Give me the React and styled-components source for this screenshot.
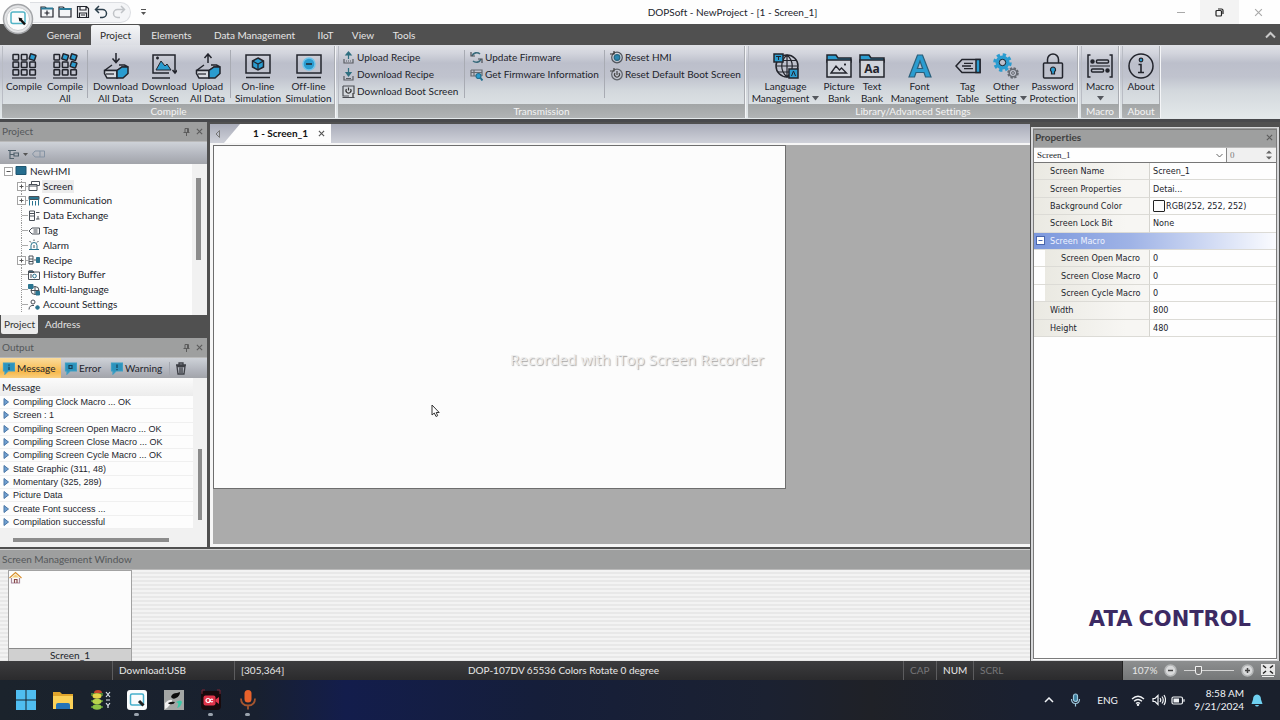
import React from "react";
import styled, { createGlobalStyle, css } from "styled-components";

const UI = `Lato, "Open Sans", sans-serif`;
const INK = "#22242c";
const BLUE = "#2a9cd0";

const Global = createGlobalStyle`
  * { box-sizing: border-box; }
  body { margin: 0; background: #4f4f4f; font-family: ${UI}; font-size: 10px; line-height: 13px; font-variant-ligatures: none; color: ${INK}; overflow-x: hidden; }
  button, input, select { font: inherit; font-variant-ligatures: none; color: inherit; margin: 0; padding: 0; border: 0; background: none; border-radius: 0; }
  h1, h2, ul, p { margin: 0; padding: 0; font-size: inherit; font-weight: inherit; list-style: none; }
  svg { display: block; flex: none; }
`;

const App_ = styled.div`
  min-height: 100vh;
  display: flex;
  flex-direction: column;
`;

/* ---------- title bar ---------- */
const TitleBar = styled.header`
  display: grid;
  grid-template-columns: 7fr auto 5fr;
  align-items: center;
  height: 24px;
  background: #fefefe;
`;
const QuickAccess = styled.div`
  display: flex;
  align-items: center;
  gap: 10px;
`;
const AppButton = styled.button`
  position: relative;
  z-index: 2;
  width: 32px;
  height: 24px;
  svg { position: absolute; left: 2px; top: 3px; }
`;
const QuickGroup = styled.div`
  display: flex;
  align-items: center;
  gap: 4px;
  height: 21px;
  padding: 0 4px 0 10px;
  margin-left: -12px;
  border: 1px solid #dcdee2;
  border-left: 0;
  border-radius: 0 11px 11px 0;
  background: #f4f5f7;
`;
const Title = styled.h1`
  font-size: 10px;
`;
const WinControls = styled.div`
  display: flex;
  justify-content: flex-end;
  height: 24px;
  padding-right: 2px;
`;
const WinButton = styled.button`
  width: 39px;
  display: grid;
  place-items: center;
  color: ${(p) => (p.$strong ? "#222" : "#a9a9a9")};
  background: ${(p) => (p.$strong ? "#f3f3f3" : "transparent")};
`;

/* ---------- ribbon ---------- */
const TabBar = styled.nav`
  display: flex;
  align-items: flex-end;
  height: 21px;
  padding: 0 4px 0 37px;
  background: #505050;
`;
const RibbonTab = styled.button`
  width: ${(p) => p.$w}px;
  height: 20px;
  color: ${(p) => (p.$active ? "#2b2b2b" : "#e6e6e6")};
  border-radius: 2px 2px 0 0;
  background: ${(p) => (p.$active ? "linear-gradient(#f6f7f8, #dcdee4)" : "transparent")};
`;
const Spacer = styled.div`
  flex: 1;
`;
const Collapse = styled.button`
  height: 20px;
  color: #c9c9c9;
`;
const Ribbon = styled.section`
  display: flex;
  gap: 2px;
  height: 77px;
  padding: 1px 0 1px 2px;
  border-bottom: 3px solid #48494c;
  background: linear-gradient(#dfe1e6 0, #d3d5dd 8px, #bcbfcb 18px, #c0c3ce 32px, #d3d8dd 46px, #e3e8ea 72px);
`;
const Group = styled.div`
  flex: none;
  display: flex;
  flex-direction: column;
  border-right: 1px solid #f4f5f7;
  box-shadow: inset -1px 0 #a9acb2, inset 1px 0 #b9bcc4;
`;
const GroupBody = styled.div`
  flex: none;
  display: flex;
  height: 58px;
  padding: ${(p) => p.$pad || "0"};
`;
const GroupLabel = styled.div`
  height: 14px;
  line-height: 14px;
  text-align: center;
  color: #f4f4f4;
  border-radius: 0 0 2px 2px;
  background: linear-gradient(#a2a5a6, #b1b4b5);
`;
const Big = styled.button`
  width: ${(p) => p.$w}px;
  height: 58px;
  display: flex;
  flex-direction: column;
  align-items: center;
  padding-top: 6px;
  white-space: nowrap;
  line-height: 12px;
`;
const BigIcon = styled.span`
  display: grid;
  place-items: center;
  height: 28px;
`;
const Line = styled.span`
  display: flex;
  align-items: center;
  gap: 3px;
  min-height: 12px;
`;
const Divider = styled.span`
  width: 1px;
  margin: 4px 1px 6px;
  background: #a8abb3;
`;
const SmallColumn = styled.div`
  width: ${(p) => p.$w}px;
  display: flex;
  flex-direction: column;
  padding: 3px 0 0 4px;
`;
const Small = styled.button`
  display: flex;
  align-items: center;
  gap: 2px;
  height: 17px;
  white-space: nowrap;
`;

/* ---------- work area ---------- */
const Body = styled.main`
  flex: 1;
  display: flex;
  background: #505050;
`;
const Main = styled.div`
  flex: 1;
  min-width: 0;
  display: flex;
  flex-direction: column;
`;
const Upper = styled.div`
  flex: 1;
  display: flex;
  gap: 3px;
  padding-bottom: 2px;
`;
const Dock = styled.aside`
  width: 207px;
  display: flex;
  flex-direction: column;
`;
const PanelHead = styled.div`
  display: flex;
  align-items: center;
  gap: 6px;
  height: 20px;
  padding: 0 4px 0 2px;
  color: ${(p) => (p.$bold ? "#3f4040" : "#54575a")};
  font-weight: ${(p) => (p.$bold ? 700 : 400)};
  background: #9e9f9f;
  border-bottom: 1px solid #b9b9b9;
  h2 { flex: 1; }
`;
const HeadButton = styled.button`
  color: #5c5c5c;
`;
const ToolStrip = styled.div`
  display: flex;
  align-items: center;
  gap: ${(p) => p.$gap}px;
  height: ${(p) => p.$h}px;
  padding: ${(p) => p.$pad || "0"};
  background: linear-gradient(#ced2d8, #b2b5bd 60%, #a2a4aa);
`;
const ClearButton = styled.button`
  padding-left: 5px;
  border-left: 1px solid #a3a6ae;
`;
const TreeBox = styled.div`
  display: flex;
  height: 151px;
  overflow: hidden;
  background: #fdfdfd;
`;
const Tree = styled.ul`
  flex: 1;
  display: grid;
  grid-template-rows: repeat(10, 1fr);
  height: 148px;
`;
const TreeRow = styled.li`
  display: flex;
  align-items: center;
  padding-left: ${(p) => (p.$root ? 4 : 17)}px;
`;
const Branch = styled.span`
  display: flex;
  align-items: center;
  align-self: stretch;
  width: 11px;
  background: ${(p) =>
    p.$root
      ? "none"
      : "repeating-linear-gradient(#999 0 1px, transparent 1px 2px) 4px 0 / 1px 100% no-repeat, linear-gradient(90deg, transparent 5px, #aaa 5px) 0 50% / 100% 1px no-repeat"};
`;
const TreeButton = styled.button`
  display: flex;
  align-items: center;
  gap: 2px;
  white-space: nowrap;
  span { padding: 0 1px; background: ${(p) => (p.$selected ? "#ececec" : "transparent")}; }
`;
const ScrollTrack = styled.div`
  width: ${(p) => p.$w}px;
  padding: ${(p) => p.$pad};
  background: #f1f1f1;
`;
const ScrollThumb = styled.div`
  height: 100%;
  background: #8c8c8c;
`;
const DockTabs = styled.div`
  display: flex;
  gap: 4px;
  height: 23px;
  padding: 0 1px;
`;
const DockTab = styled.button`
  height: 19px;
  padding: 0 3px;
  color: ${(p) => (p.$active ? "#333" : "#e4e4e4")};
  border-radius: 0 0 2px 2px;
  background: ${(p) => (p.$active ? "#ebebeb" : "transparent")};
`;
const FilterButton = styled.button`
  display: flex;
  align-items: center;
  gap: 2px;
  width: ${(p) => p.$w}px;
  height: 20px;
  padding-left: 2px;
  background: ${(p) => (p.$on ? "linear-gradient(#fbdc9c, #f8b94c 70%, #f9cf80)" : "transparent")};
`;
const OutputBox = styled.div`
  flex: 1;
  display: flex;
  background: #f1f1f1;
`;
const OutputMain = styled.div`
  flex: 1;
  display: flex;
  flex-direction: column;
`;
const MessageTable = styled.table`
  width: 100%;
  height: 151px;
  border-collapse: separate;
  border-spacing: 0;
  font-family: "Liberation Sans", sans-serif;
  font-size: 9px;
  line-height: 12px;
  background: #fdfdfd;
  th { height: 18px; padding: 0 2px; text-align: left; font: 10px/16px ${UI}; background: linear-gradient(#fbfbfb, #ececec); }
  td { height: 13px; padding: 0 3px; border-bottom: 1px solid #f0f0f0; }
  div { display: flex; align-items: center; gap: 4px; white-space: nowrap; }
`;
const HTrack = styled.div`
  flex: 1;
  display: flex;
  align-items: flex-end;
  padding: 0 24px 5px 13px;
`;
const HThumb = styled.div`
  flex: 1;
  height: 4px;
  background: #8c8c8c;
`;

const Editor = styled.section`
  flex: 1;
  min-width: 0;
  display: flex;
  flex-direction: column;
  padding-top: 2px;
`;
const DocTabs = styled.div`
  display: flex;
  height: 19px;
  background: linear-gradient(#a9acb9, #cfd1d9);
`;
const DocArrow = styled.button`
  width: 14px;
  display: grid;
  place-items: center;
`;
const DocTab = styled.div`
  display: flex;
  align-items: center;
  justify-content: flex-end;
  gap: 10px;
  width: 107px;
  padding-right: 6px;
  font-weight: 700;
  color: #111;
  background: #fdfdfd;
  clip-path: polygon(16px 0, 100% 0, 100% 100%, 0 100%);
`;
const Workspace = styled.div`
  flex: 1;
  padding: 0;
  border: solid #f6f6f6;
  border-width: 2px 0 3px 3px;
  background: #ababab;
`;
const Canvas = styled.div`
  position: relative;
  width: 573px;
  max-width: 100%;
  height: 344px;
  border: 1px solid #6e6e6e;
  background: #fcfcfc;
`;
const Watermark = styled.p`
  position: absolute;
  left: 296px;
  top: 203px;
  font-family: "Open Sans", sans-serif;
  font-size: 15px;
  line-height: 20px;
  white-space: nowrap;
  color: #ededed;
  text-shadow: 1px 1px 1px #a6a6a6;
`;
const Cursor = styled.svg`
  position: absolute;
  left: 217px;
  top: 258px;
`;

const Manager = styled.section`
  height: 112px;
  display: flex;
  flex-direction: column;
  border-top: 1px solid #d0d0d0;
`;
const Thumbs = styled.div`
  flex: 1;
  overflow: hidden;
  padding-left: 8px;
  background: repeating-linear-gradient(#f3f3f3 0 2px, #e8e8e8 2px 4px);
`;
const Thumb = styled.figure`
  width: 124px;
  height: 100%;
  overflow: hidden;
  margin: 0;
  border: solid #a2a2a2;
  border-width: 1px 1px 0;
  background: #d0d0d0;
  figcaption { text-align: center; line-height: 13px; }
`;
const ThumbPage = styled.div`
  height: 78px;
  border-bottom: 1px solid #8a8a8a;
  background: #fcfcfc;
`;

/* ---------- properties ---------- */
const Properties = styled.aside`
  width: 248px;
  margin: 5px 1px 0;
  display: flex;
  flex-direction: column;
  border: solid #d7d8da;
  border-width: 1px 2px;
  outline: 1px solid #7b7b7b;
  outline-offset: -3px;
  background: #fefefe;
`;
const Picker = styled.div`
  display: flex;
  height: 15px;
  border-bottom: 1px solid #777;
`;
const SelectWrap = styled.div`
  flex: 1;
  display: flex;
  align-items: center;
  padding-right: 3px;
  border-right: 1px solid #888;
  select { flex: 1; appearance: none; padding-left: 4px; font: 9px/13px "Liberation Serif", serif; outline: 0; }
`;
const SpinWrap = styled.div`
  width: 50px;
  display: flex;
  align-items: center;
  padding: 0 5px 0 3px;
  background: #f0f0f0;
  input { flex: 1; min-width: 0; height: 13px; font: 9px/11px "Liberation Serif", serif; color: #7a7a7a; }
`;
const PropTable = styled.table`
  width: 100%;
  height: 174px;
  border-collapse: separate;
  border-spacing: 0;
  table-layout: fixed;
  font-family: "DejaVu Sans Condensed", "DejaVu Sans", sans-serif;
  font-stretch: condensed;
  font-size: 9px;
  line-height: 12px;
  th, td { padding: 0; font-weight: 400; text-align: left; white-space: nowrap; border-bottom: 1px solid #dcdbd6; }
  th { width: 117px; padding-left: 17px; border-right: 1px solid #d5d4cf; background: linear-gradient(90deg, #eae9e2, #f7f6f3 80%); }
  td { padding-left: 3px; }
`;
const PropRow = styled.tr`
  ${(p) =>
    p.$child &&
    css`
      && th { padding-left: 28px; background: linear-gradient(90deg, #fefefe 12px, #eae9e2 12px, #f7f6f3 90%); }
    `}
`;
const SectionRow = styled.tr`
  background: linear-gradient(90deg, #7c98dd, #9fb3e6 40%, #fbfcff);
  && th { padding-left: 3px; border-right: 0; background: none; color: #eef2ff; }
  button { display: flex; align-items: center; gap: 5px; }
`;
const ColorValue = styled.span`
  display: flex;
  align-items: center;
  gap: 1px;
`;
const Swatch = styled.span`
  width: 12px;
  height: 12px;
  border: 1px solid #222;
  border-radius: 1px;
  background: #fcfcfc;
`;
const Brand = styled.p`
  margin: auto 26px 29px auto;
  display: flex;
  gap: 6px;
  font: 700 21px/24px "DejaVu Sans", sans-serif;
  color: #3c2a63;
`;

/* ---------- status bar ---------- */
const StatusBar = styled.footer`
  display: flex;
  height: 19px;
  align-items: stretch;
  color: #e6e6e6;
  background: linear-gradient(#3c3c3e, #2b2b2d);
`;
const StatusCell = styled.div`
  flex: ${(p) => (p.$grow ? "1" : "none")};
  width: ${(p) => (p.$grow ? "auto" : p.$w + "px")};
  padding-left: 6px;
  line-height: 19px;
  white-space: nowrap;
  color: ${(p) => (p.$dim ? "#77777a" : "#e8e8e8")};
  border-left: ${(p) => (p.$line ? "1px solid #5c5c5e" : "0")};
`;
const ZoomBox = styled.div`
  width: 158px;
  display: flex;
  align-items: center;
  gap: 5px;
  padding: 0 5px 0 9px;
  background: linear-gradient(#8d8f90, #747677);
  border-left: 1px solid #222;
  output { width: 27px; }
  button:last-child { margin-left: auto; }
`;
const Range = styled.input`
  appearance: none;
  margin: 0 2px;
  width: 50px;
  height: 14px;
  background: linear-gradient(#d4d4d4, #d4d4d4) center / 100% 1px no-repeat;
  &::-webkit-slider-thumb {
    appearance: none;
    width: 7px;
    height: 9px;
    border: 1px solid #f2f2f2;
    border-radius: 0 0 3px 3px;
    background: #777;
  }
`;

/* ---------- taskbar ---------- */
const Taskbar = styled.footer`
  display: flex;
  align-items: center;
  height: 40px;
  padding: 0 11px 0 7px;
  color: #f1f3f6;
  background: linear-gradient(90deg, #1b232c 0, #18202f 20%, #131d4c 27%, #151e3a 42%, #1b2131 60%, #1f2127 68%, #1a2030 80%, #1a202c);
`;
const TaskButton = styled.button`
  width: 37px;
  height: 40px;
  display: flex;
  flex-direction: column;
  align-items: center;
  gap: 2px;
  padding-top: 9px;
  &::after {
    content: "";
    width: 5px;
    height: 3px;
    border-radius: 2px;
    background: ${(p) => (p.$open ? "#9aa3ad" : "transparent")};
  }
`;
const Tray = styled.div`
  display: flex;
  align-items: center;
  button { display: grid; place-items: center; }
`;
const TrayButton = styled.button`
  width: ${(p) => p.$w}px;
`;
const Clock = styled.div`
  width: 57px;
  padding-right: 1px;
  text-align: right;
`;

/* ---------- icons ---------- */
const Ico = ({ w = 26, h = w, vb, children, ...r }) => (
  <svg width={w} height={h} viewBox={vb || `0 0 ${w} ${h}`} fill="none" stroke={INK} strokeWidth="1.5" aria-hidden="true" {...r}>
    {children}
  </svg>
);
const Compile = ({ all }) => (
  <Ico>
    {[0, 1, 2].map((r) =>
      [0, 1, 2].map((c) => {
        const hot = all ? (r === 0 && c > 0) || (r === 1 && c === 2) : r === 0 && c === 2;
        return (
          <rect key={r + "-" + c} x={2 + c * 8.4} y={1.5 + r * 7.6} width="5.6" height="5.4" rx=".6"
            fill={hot ? BLUE : "none"} transform={hot ? `rotate(18 ${5 + c * 8.4} ${4 + r * 7.6})` : undefined} />
        );
      })
    )}
    <path d="M1 25h24" strokeWidth="1.2" />
  </Ico>
);
const Device = ({ up }) => (
  <Ico>
    <path d={up ? "M13 10V1M9.500 5 13 1l3.500 4" : "M13 0v9M9.500 5.500 13 9.500l3.500-4"} />
    <path d="M9 12 1.500 17.500M16 12h5.500L25 14M1.500 17.500H14L19 14h6" />
    <path d="M1.500 17.500v3L4 25h10v-7.500z" fill="#d8dbe1" />
    <path d="M14 17.500 19 14h6v6.500L20 25h-6z" fill={BLUE} />
    <path d="M3 21h8" strokeWidth="1.200" />
  </Ico>
);
const DownloadScreen = () => (
  <Ico>
    <path d="M24 11V2H2v18h16M1 25h18" />
    <path d="m5 17 5-9 4 5 2-2 4 6z" fill={BLUE} stroke="none" />
    <path d="m5 17 5-9 4 5 2-2 4 6z" strokeWidth="1" />
    <path d="M24 11v9M21.500 17l2.500 3 2.500-3M5 5h3M6.500 3.500v3" />
  </Ico>
);
const Simulation = ({ off }) => (
  <Ico>
    <rect x="1" y="2" width="24" height="18" />
    <path d="M1 24.500h24" />
    {off ? (
      <>
        <circle cx="13" cy="11" r="6" fill={BLUE} stroke="#6fc4ea" />
        <path d="M10 11h6" />
      </>
    ) : (
      <>
        <path d="m13 5 5.500 3v6L13 17l-5.500-3V8z" fill={BLUE} />
        <path d="m7.500 8 5.500 3 5.500-3M13 11v6" strokeWidth="1.200" />
      </>
    )}
  </Ico>
);
const Language = () => (
  <Ico>
    <circle cx="14" cy="13" r="11" />
    <path d="M14 2v22M3 13h22M5 7.500h18M5 19h18M14 2c-7 6-7 16 0 22M14 2c7 6 7 16 0 22" strokeWidth="1.200" />
    <rect x="1" y="1" width="9" height="8" fill={BLUE} />
    <rect x="16" y="16" width="9" height="9" fill={BLUE} />
    <path d="M3 3.500h5M5.500 3.500V7M18.500 23l2-5 2 5" strokeWidth="1" />
  </Ico>
);
const Folder = ({ text }) => (
  <Ico>
    <path d="M1 2h9l2 3h13v4H1z" fill={BLUE} />
    <path d="M1 7h24v17H1z" fill="#d0d4db" />
    {text ? (
      <text x="13" y="20" textAnchor="middle" fontFamily="Open Sans" fontWeight="700" fontSize="12" fill={INK} stroke="none">Aa</text>
    ) : (
      <path d="m5 20 5-7 3.500 4 2-2 5 5zM19 10.500v2M18 11.500h2" strokeWidth="1.300" />
    )}
  </Ico>
);
const FontA = () => (
  <Ico>
    <path d="M10.500 2h5L24 24h-5.500l-1.500-4.500H9L7.500 24H2zM13 8l-2.600 7.500h5.200z" fill={BLUE} fillRule="evenodd" stroke="#2b5f7a" strokeWidth="1.200" />
  </Ico>
);
const TagIcon = () => (
  <Ico>
    <path d="M7 6.500h18v13H7L1 13z" />
    <path d="M21 6.500h4v13h-4z" fill={BLUE} />
    <path d="M9 10.300h9M7 13h9M9 15.700h9" strokeWidth="1.300" />
  </Ico>
);
const Gears = () => (
  <Ico>
    <circle cx="9.500" cy="9.500" r="7.500" stroke={BLUE} strokeWidth="3.500" strokeDasharray="3.200 2.690" />
    <circle cx="9.500" cy="9.500" r="5" stroke={BLUE} strokeWidth="4" />
    <circle cx="9.500" cy="9.500" r="3.200" strokeWidth="1" />
    <circle cx="20" cy="20" r="4.800" stroke="#666a72" strokeWidth="2" strokeDasharray="2.300 1.470" />
    <circle cx="20" cy="20" r="3.800" stroke="#666a72" />
    <circle cx="20" cy="20" r="1.400" stroke="#666a72" strokeWidth="1" />
  </Ico>
);
const Lock = () => (
  <Ico>
    <rect x="3.500" y="10" width="19" height="15" rx="1" />
    <path d="M7.500 10V6.500a5.500 5.500 0 0 1 11 0V10" />
    <path d="M13 14a2.600 2.600 0 0 1 1.500 4.700V21h-3v-2.300A2.600 2.600 0 0 1 13 14z" fill={BLUE} strokeWidth="1.200" />
  </Ico>
);
const MacroIcon = () => (
  <Ico>
    <path d="M3.500 2H1v22h2.500M22.500 2H25v22h-2.500" />
    <circle cx="5.500" cy="8.500" r="1.500" fill={INK} />
    <rect x="9.500" y="7" width="12" height="3" rx="1" />
    <rect x="4.500" y="16" width="12" height="3" rx="1" />
    <circle cx="20.500" cy="17.500" r="1.500" fill={INK} />
    <path d="M3 13h20" strokeWidth="1" />
  </Ico>
);
const About = () => (
  <Ico>
    <circle cx="13" cy="13" r="12" />
    <circle cx="13" cy="7" r="1.800" fill={BLUE} strokeWidth="1.200" />
    <path d="M10.500 11.500H13V19M10 19.500h6" strokeWidth="1.600" />
  </Ico>
);
const Caret = () => (
  <Ico w={7} h={5} stroke="none"><path d="M0 0h7L3.500 4.500z" fill="#55585e" /></Ico>
);
const Cross = ({ w = 7, ...r }) => (
  <Ico w={w} vb="0 0 8 8" stroke="currentColor" strokeWidth="1.300" {...r}><path d="m1 1 6 6M7 1 1 7" /></Ico>
);
const Pin = () => (
  <Ico w={7} h={8} stroke="currentColor" strokeWidth="1"><path d="M2 .5h3.500v4H2zM.5 4.500h6M3.500 4.500V8M4.500.5v4" /></Ico>
);

const SMALL = {
  upload: <><path d="M6.500 8V2M4 4l2.500-3L9 4z" stroke="#2f6f80" fill="#2f6f80" /><path d="M2 8v4h9V8M4 10h1M6 10h1M8 10h1" stroke="#5a5d63" /></>,
  download: <><path d="M6.500 0v6M4 4.500 6.500 8 9 4.500z" stroke="#2f6f80" fill="#2f6f80" /><path d="M2 8v4h9V8M4 10.500h5" stroke="#5a5d63" /></>,
  boot: <><path d="M1 1h11v8M1 1v10h6M.5 12.500h12" stroke="#4a4d53" /><path d="M4.500 4a2.500 2.500 0 1 0 4 0M6.500 2.500v3M11 8v4" stroke="#333" /></>,
  refresh: <><path d="M2 5a5 5 0 0 1 8-2M11 8a5 5 0 0 1-8 2" stroke="#3a6b7c" strokeWidth="1.600" /><path d="M1 1v4h4M12 12V8H8" stroke="#4c4f55" /></>,
  info: <><path d="M1 2h11v6M1 2v6h5M1 4.500h11M4 2v6" stroke="#666a70" /><circle cx="8.500" cy="8" r="2.500" fill={BLUE} stroke="#24708f" /><path d="m10.500 10 2 2.500" stroke="#24708f" strokeWidth="2" /></>,
  reset: <><circle cx="7" cy="6.500" r="5.300" stroke="#4f545b" /><circle cx="7" cy="6.500" r="2.800" fill="#2b86b0" stroke="#226680" /><path d="M0 3h4V0" stroke="#333" /></>,
  power: <><circle cx="7" cy="6.500" r="5.300" stroke="#5d6167" /><path d="M5 5a2.500 2.500 0 1 0 4 0M7 3v4M0 3h4V0" stroke="#444" /></>,
};
const SmallIcon = ({ name }) => <Ico w={13} strokeWidth="1.200">{SMALL[name]}</Ico>;

const T = "#2b7590";
const TREE_ICONS = {
  hmi: <path d="M1 1.500h10v8H1z" fill="#256d8e" stroke="#1e5570" />,
  screen: <><path d="M3.500 1.500h8v4h-8z" fill="#fff" /><path d="M1 4.500h8v6H1zM1 6h8" fill="#fff" /></>,
  comm: <><path d="M1 1.500h10v3H1z" fill={T} /><path d="M1.500 4v6.500M10.500 4v6.500M4.500 6v4.500M7.500 6v4.500" stroke={T} /></>,
  exchange: <><path d="M1.500 1h5v9.500h-5zM2 3.500h4M2 6h4" /><path d="M8 2.500h3.500M8 9h3.500M10 6v3" /></>,
  tag: <><path d="M4 3h7.500v6H4L1 6z" /><path d="M5.500 5h4M5.500 7h4" /></>,
  alarm: <><path d="M3 10V6.500a3 3 0 0 1 6 0V10M1 10.500h10" stroke={T} /><path d="M6 6v3M6 .5V2M1.500 2l1.500 1.500M10.500 2 9 3.500" /></>,
  recipe: <><path d="M1 2h4v8H1zM1 5h4M1 7.500h4M6 6h2" /><path d="M8.500 3.500h3v5h-3z" fill={T} stroke={T} /></>,
  history: <><path d="M.5 2h4l1 1h6v7.500H.5z" /><path d="M1 2h4l1 1.500H1z" fill={T} /><circle cx="6.500" cy="7" r="1.800" stroke={T} /><path d="M3 5v4" /></>,
  lang: <><circle cx="7" cy="6.500" r="4" /><path d="M3 6.500h8M7 2.500v8" /><path d="M.5.5h4.500v4H.5zM8 7.500h3.500V11H8z" fill={T} stroke={T} /></>,
  account: <><circle cx="5" cy="3" r="2" /><path d="M1 10.500C1 7.500 3 6 6 6.500" /><circle cx="9.500" cy="8.500" r="1.800" fill={T} stroke={T} /></>,
};
const Expander = ({ open }) => (
  <Ico w={9} stroke="#a4a4a4" strokeWidth="1">
    <rect x=".5" y=".5" width="8" height="8" fill="#fff" />
    <path d={open ? "M2.500 4.500h4" : "M2.500 4.500h4M4.500 2.500v4"} stroke="#555" />
  </Ico>
);
const Bubble = ({ kind }) => (
  <Ico w={13} strokeWidth="1.200">
    <path d="M1.500 1h11v8H6l-3 3V9H1.500z" fill="#2c93bd" stroke="#3f9fc4" />
    <path d={kind === "error" ? "M5 3.500h3v3H5z" : kind === "warning" ? "M7 2.500v3.500M7 7v1.200" : "M7 2.500v1.200M7 4.700V8"} stroke="#173f55" />
  </Ico>
);

/* ---------- data ---------- */
const TABS = [["General", 54], ["Project", 49], ["Elements", 63], ["Data Management", 103], ["IIoT", 39], ["View", 36], ["Tools", 46]];
const MESSAGES = [
  "Compiling Clock Macro ... OK", "Screen : 1", "Compiling Screen Open Macro ... OK", "Compiling Screen Close Macro ... OK",
  "Compiling Screen Cycle Macro ... OK", "State Graphic (311, 48)", "Momentary (325, 289)", "Picture Data", "Create Font success ...", "Compilation successful",
];
const NODES = [
  ["hmi", "NewHMI", "root"], ["screen", "Screen", "plus"], ["comm", "Communication", "plus"], ["exchange", "Data Exchange"], ["tag", "Tag"],
  ["alarm", "Alarm"], ["recipe", "Recipe", "plus"], ["history", "History Buffer"], ["lang", "Multi-language"], ["account", "Account Settings"],
];

const BigButton = ({ w, icon, a, b, menu }) => (
  <Big $w={w}>
    <BigIcon>{icon}</BigIcon>
    <Line>{a}</Line>
    <Line>{b}{menu && <Caret />}</Line>
  </Big>
);
const SmallButton = ({ icon, children }) => <Small><SmallIcon name={icon} />{children}</Small>;

export default function App() {
  return (
    <App_>
      <Global />
      <TitleBar>
        <QuickAccess>
          <AppButton aria-label="Application menu">
            <Ico w={32}>
              <circle cx="16" cy="16" r="14.500" fill="#e3e4e6" stroke="#a4a6a9" strokeWidth="1.500" />
              <circle cx="16" cy="16" r="11.500" fill="#fbfbfb" stroke="#c9cbcd" strokeWidth="1" />
              <rect x="9" y="9" width="14" height="11.500" rx="2" stroke="#52b4c6" strokeWidth="1.500" />
              <path d="m18 16 5 5.500" stroke="#111" strokeWidth="2.500" />
              <path d="m16.500 14.500 4 1-3 3z" fill="#111" stroke="none" />
            </Ico>
          </AppButton>
          <QuickGroup>
            <button aria-label="New"><Ico w={14} strokeWidth="1.200"><path d="M1 2h4l1.500 1.500H13V12H1z" /><path d="M1 3.500h12" stroke="#2b7b99" strokeWidth="2" /><path d="M7 5.500v5M4.500 8h5" /></Ico></button>
            <button aria-label="Open"><Ico w={14} strokeWidth="1.200"><path d="M1 2h4l1.500 1.500H13V12H1z" /><path d="M1 4h12" stroke="#2b7b99" strokeWidth="2" /></Ico></button>
            <button aria-label="Save"><Ico w={14} strokeWidth="1.200"><path d="M1.500 1.500h9l2 2v9h-11zM4 1.500V5h6V1.500M3.500 12.500V8h7v4.500M5 10h4" /></Ico></button>
            <button aria-label="Undo"><Ico w={14} strokeWidth="1.500"><path d="M5 1 1.500 4.500 5 8M2 4.500h6.500a4 4 0 0 1 0 8H6" stroke="#2c3f4c" /></Ico></button>
            <button aria-label="Redo"><Ico w={14} strokeWidth="1.500"><path d="m9 1 3.500 3.500L9 8M12 4.500H5.500a4 4 0 0 0 0 8H8" stroke="#c0c3c7" /></Ico></button>
          </QuickGroup>
          <button aria-label="Customize toolbar"><Ico w={5} h={6} strokeWidth="1" stroke="#555"><path d="M0 .5h5" /><path d="M0 3h5L2.500 6z" fill="#555" stroke="none" /></Ico></button>
        </QuickAccess>
        <Title>DOPSoft - NewProject - [1 - Screen_1]</Title>
        <WinControls>
          <WinButton aria-label="Minimize"><Ico w={8} stroke="currentColor" strokeWidth="1"><path d="M0 4.500h8" /></Ico></WinButton>
          <WinButton $strong aria-label="Restore"><Ico w={9} stroke="currentColor" strokeWidth="1.200"><rect x="1" y="2.500" width="5.500" height="5.500" rx="1" /><path d="M3 1h3.500q1.500 0 1.500 1.500V6" /></Ico></WinButton>
          <WinButton aria-label="Close"><Cross w={9} strokeWidth="1" /></WinButton>
        </WinControls>
      </TitleBar>

      <TabBar>
        {TABS.map(([t, w]) => <RibbonTab key={t} $w={w} $active={t === "Project"}>{t}</RibbonTab>)}
        <Spacer />
        <Collapse aria-label="Collapse ribbon"><Ico w={11} h={8} stroke="currentColor" strokeWidth="2"><path d="m1 6.500 4.500-4.500L10 6.500" /></Ico></Collapse>
      </TabBar>

      <Ribbon>
        <Group>
          <GroupBody $pad="0 2px">
            <BigButton w={40} icon={<Compile />} a="Compile" />
            <BigButton w={42} icon={<Compile all />} a="Compile" b="All" />
            <Divider />
            <BigButton w={53} icon={<Device />} a="Download" b="All Data" />
            <BigButton w={44} icon={<DownloadScreen />} a="Download" b="Screen" />
            <BigButton w={43} icon={<Device up />} a="Upload" b="All Data" />
            <Divider />
            <BigButton w={52} icon={<Simulation />} a="On-line" b="Simulation" />
            <BigButton w={49} icon={<Simulation off />} a="Off-line" b="Simulation" />
          </GroupBody>
          <GroupLabel>Compile</GroupLabel>
        </Group>
        <Group>
          <GroupBody>
            <SmallColumn $w={125}>
              <SmallButton icon="upload">Upload Recipe</SmallButton>
              <SmallButton icon="download">Download Recipe</SmallButton>
              <SmallButton icon="boot">Download Boot Screen</SmallButton>
            </SmallColumn>
            <Divider />
            <SmallColumn $w={137}>
              <SmallButton icon="refresh">Update Firmware</SmallButton>
              <SmallButton icon="info">Get Firmware Information</SmallButton>
            </SmallColumn>
            <Divider />
            <SmallColumn $w={139}>
              <SmallButton icon="reset">Reset HMI</SmallButton>
              <SmallButton icon="power">Reset Default Boot Screen</SmallButton>
            </SmallColumn>
          </GroupBody>
          <GroupLabel>Transmission</GroupLabel>
        </Group>
        <Group>
          <GroupBody>
            <BigButton w={75} icon={<Language />} a="Language" b="Management" menu />
            <BigButton w={32} icon={<Folder />} a="Picture" b="Bank" />
            <BigButton w={34} icon={<Folder text />} a="Text" b="Bank" />
            <BigButton w={61} icon={<FontA />} a="Font" b="Management" />
            <BigButton w={35} icon={<TagIcon />} a="Tag" b="Table" />
            <BigButton w={42} icon={<Gears />} a="Other" b="Setting" menu />
            <BigButton w={51} icon={<Lock />} a="Password" b="Protection" />
          </GroupBody>
          <GroupLabel>Library/Advanced Settings</GroupLabel>
        </Group>
        <Group>
          <GroupBody><BigButton w={38} icon={<MacroIcon />} a="Macro" menu /></GroupBody>
          <GroupLabel>Macro</GroupLabel>
        </Group>
        <Group>
          <GroupBody><BigButton w={38} icon={<About />} a="About" /></GroupBody>
          <GroupLabel>About</GroupLabel>
        </Group>
      </Ribbon>

      <Body>
        <Main>
          <Upper>
            <Dock>
              <PanelHead><h2>Project</h2><HeadButton aria-label="Pin project"><Pin /></HeadButton><HeadButton aria-label="Close project"><Cross /></HeadButton></PanelHead>
              <ToolStrip $h={22} $gap={4} $pad="2px 8px 0">
                <button aria-label="Sort tree"><Ico w={11} stroke="#50616c" strokeWidth="1.200"><path d="M0 1.500h8M2 1.500v8h4M2 5.500h4M6 4h4.500v3H6z" /></Ico></button>
                <Ico w={5} h={3} stroke="none"><path d="M0 0h5L2.500 3z" fill="#555" /></Ico>
                <button aria-label="Rename"><Ico w={13} h={8} stroke="#8593a3" strokeWidth="1"><path d="M3 1h9.500v6H3L.5 4zM8 1v6" /></Ico></button>
              </ToolStrip>
              <TreeBox>
                <Tree>
                  {NODES.map(([ic, label, mark]) => (
                    <TreeRow key={label} $root={mark === "root"}>
                      <Branch $root={mark === "root"}>{mark && <Expander open={mark === "root"} />}</Branch>
                      <TreeButton $selected={label === "Screen"}>
                        <Ico w={12} h={12} strokeWidth="1" stroke="#4a5058">{TREE_ICONS[ic]}</Ico>
                        <span>{label}</span>
                      </TreeButton>
                    </TreeRow>
                  ))}
                </Tree>
                <ScrollTrack $w={15} $pad="14px 6px 55px 4px"><ScrollThumb /></ScrollTrack>
              </TreeBox>
              <DockTabs><DockTab $active>Project</DockTab><DockTab>Address</DockTab></DockTabs>
              <PanelHead><h2>Output</h2><HeadButton aria-label="Pin output"><Pin /></HeadButton><HeadButton aria-label="Close output"><Cross /></HeadButton></PanelHead>
              <ToolStrip $h={20} $gap={1}>
                <FilterButton $w={61} $on><Bubble />Message</FilterButton>
                <FilterButton $w={45}><Bubble kind="error" />Error</FilterButton>
                <FilterButton $w={60}><Bubble kind="warning" />Warning</FilterButton>
                <ClearButton aria-label="Clear"><Ico w={12} h={13} strokeWidth="1.300" stroke="#3d3f45"><path d="M1 3h10M4 3V1h4v2M2 4.500 3 12h6l1-7.500zM5 5.500V11M7 5.500V11" /></Ico></ClearButton>
              </ToolStrip>
              <OutputBox>
                <OutputMain>
                  <MessageTable>
                    <thead><tr><th>Message</th></tr></thead>
                    <tbody>
                      {MESSAGES.map((m) => (
                        <tr key={m}><td><div><Ico w={6} h={8} strokeWidth="1" stroke="#4a76a5"><path d="M1 .5 5.500 4 1 7.500z" fill="#6f9fd0" /></Ico>{m}</div></td></tr>
                      ))}
                    </tbody>
                  </MessageTable>
                  <HTrack><HThumb /></HTrack>
                </OutputMain>
                <ScrollTrack $w={14} $pad="71px 5px 27px"><ScrollThumb /></ScrollTrack>
              </OutputBox>
            </Dock>

            <Editor>
              <DocTabs>
                <DocArrow aria-label="Previous tab"><Ico w={5} h={8} strokeWidth="1" stroke="#777"><path d="M4.500.5v7L1 4z" /></Ico></DocArrow>
                <DocTab><span>1 - Screen_1</span><button aria-label="Close tab"><Cross stroke="#555" /></button></DocTab>
              </DocTabs>
              <Workspace>
                <Canvas>
                  <Watermark>Recorded with iTop Screen Recorder</Watermark>
                  <Cursor width="9" height="14" viewBox="0 0 9 14" aria-hidden="true">
                    <path d="M1 1v10l2.300-2L5 12.500l1.700-.8L5.200 8.500h3z" fill="#fff" stroke="#333" strokeWidth="1" />
                  </Cursor>
                </Canvas>
              </Workspace>
            </Editor>
          </Upper>
          <Manager>
            <PanelHead><h2>Screen Management Window</h2></PanelHead>
            <Thumbs>
              <Thumb>
                <ThumbPage>
                  <Ico w={13} h={13} strokeWidth="1.200"><path d="M.5 7 6.500 1.500 12.500 7" stroke="#d9902f" /><path d="M2.500 7v5h8V7" stroke="#a98aa0" /><path d="M5.500 12V8.500h2.500V12" stroke="#8a4a4a" /><path d="m3 6.500 3.500-3L10 6.500z" fill="#f6cf7a" stroke="none" /></Ico>
                </ThumbPage>
                <figcaption>Screen_1</figcaption>
              </Thumb>
            </Thumbs>
          </Manager>
        </Main>

        <Properties>
          <PanelHead $bold><h2>Properties</h2><HeadButton aria-label="Close properties"><Cross /></HeadButton></PanelHead>
          <Picker>
            <SelectWrap>
              <select aria-label="Object" defaultValue="Screen_1"><option>Screen_1</option></select>
              <Ico w={7} h={5} strokeWidth="1" stroke="#666"><path d="m.5 1 3 3 3-3" /></Ico>
            </SelectWrap>
            <SpinWrap>
              <input aria-label="State" type="text" inputMode="numeric" defaultValue="0" />
              <Ico w={6} h={10} stroke="none"><path d="M0 3.500h6L3 .5zM0 6.500h6l-3 3z" fill="#666" /></Ico>
            </SpinWrap>
          </Picker>
          <PropTable>
            <tbody>
              <PropRow><th scope="row">Screen Name</th><td>Screen_1</td></PropRow>
              <PropRow><th scope="row">Screen Properties</th><td>Detai...</td></PropRow>
              <PropRow><th scope="row">Background Color</th><td><ColorValue><Swatch />RGB(252, 252, 252)</ColorValue></td></PropRow>
              <PropRow><th scope="row">Screen Lock Bit</th><td>None</td></PropRow>
              <SectionRow>
                <th colSpan={2}><button><Ico w={9} strokeWidth="1" stroke="#4a66ad"><rect x=".5" y=".5" width="8" height="8" fill="#fff" /><path d="M2.500 4.500h4" /></Ico>Screen Macro</button></th>
              </SectionRow>
              <PropRow $child><th scope="row">Screen Open Macro</th><td>0</td></PropRow>
              <PropRow $child><th scope="row">Screen Close Macro</th><td>0</td></PropRow>
              <PropRow $child><th scope="row">Screen Cycle Macro</th><td>0</td></PropRow>
              <PropRow><th scope="row">Width</th><td>800</td></PropRow>
              <PropRow><th scope="row">Height</th><td>480</td></PropRow>
            </tbody>
          </PropTable>
          <Brand><span>ATA</span><span>CONTROL</span></Brand>
        </Properties>
      </Body>

      <StatusBar>
        <StatusCell $w={112} />
        <StatusCell $w={122} $line>Download:USB</StatusCell>
        <StatusCell $w={228} $line>[305,364]</StatusCell>
        <StatusCell $grow>DOP-107DV 65536 Colors Rotate 0 degree</StatusCell>
        <StatusCell $w={33} $line $dim>CAP</StatusCell>
        <StatusCell $w={37} $line>NUM</StatusCell>
        <StatusCell $w={149} $line $dim>SCRL</StatusCell>
        <ZoomBox>
          <output>107%</output>
          <button aria-label="Zoom out"><Ico w={13}><circle cx="6.500" cy="6.500" r="5.500" fill="#d9dadb" stroke="#b5b7b8" /><path d="M4 6.500h5" stroke="#444" /></Ico></button>
          <Range type="range" min="0" max="100" defaultValue="26" aria-label="Zoom" />
          <button aria-label="Zoom in"><Ico w={13}><circle cx="6.500" cy="6.500" r="5.500" fill="#d9dadb" stroke="#b5b7b8" /><path d="M4 6.500h5M6.500 4v5" stroke="#444" /></Ico></button>
          <button aria-label="Fit to window"><Ico w={14} h={13}><path d="M0 0h14v11H0z" fill="#e8e8e8" stroke="none" /><path d="m2 1.500 3 2.500M12 1.500 9 4M2 9.500 5 7M12 9.500 9 7" stroke="#222" /><path d="M1 12.500h12" stroke="#eee" strokeWidth="1" /></Ico></button>
        </ZoomBox>
      </StatusBar>

      <Taskbar>
        <TaskButton aria-label="Start"><Ico w={22} stroke="none"><path d="M1 1h9.500v9.500H1zM11.500 1H21v9.500h-9.500zM1 11.500h9.500V21H1zM11.500 11.500H21V21h-9.500z" fill="#4fbdf0" /></Ico></TaskButton>
        <TaskButton aria-label="File Explorer"><Ico w={22} stroke="none"><path d="M1 3h7l2 2h11v15H1z" fill="#e0a52c" /><path d="M1 7h20v13H1z" fill="#fbd158" /><path d="M4 20v-4q0-2 2-2h10q2 0 2 2v4z" fill="#2473b8" /></Ico></TaskButton>
        <TaskButton aria-label="WPLSoft"><Ico w={22} stroke="none">
          <ellipse cx="9" cy="4" rx="4" ry="3" fill="#c6452c" /><path d="M2 4h12v3H2zM2 11h12v2H2zM2 17h12v2H2z" fill="#4d7f35" />
          <ellipse cx="8" cy="7" rx="4.500" ry="2.800" fill="#e6d24a" /><ellipse cx="8" cy="12.500" rx="4.500" ry="2.800" fill="#b9d44c" /><ellipse cx="8" cy="18" rx="4.500" ry="2.800" fill="#8fc445" />
          <path d="m17 3 4 5M21 3l-4 5M17 11h4M17 14l2 2.500 2-2.500M19 16.500V19" stroke="#dfe6ee" strokeWidth="1.200" />
        </Ico></TaskButton>
        <TaskButton $open aria-label="DOPSoft"><Ico w={22}><rect x="1" y="1" width="20" height="20" rx="3" fill="#fafcfd" stroke="none" /><rect x="4.500" y="5" width="13" height="11" rx="1.500" stroke="#45aecb" strokeWidth="1.500" /><path d="m13 12 4.500 4.500" stroke="#222" strokeWidth="3" /></Ico></TaskButton>
        <TaskButton aria-label="ISPSoft"><Ico w={22} stroke="none"><rect x="1" y="1" width="20" height="20" fill="#a3a6a5" /><path d="M8 8q1-4 6-4l3-1q0 4-4 6-3 2-5-1z" fill="#0c0c0c" /><path d="M2 14q4-4 7-3 1 2-5 8l-2 1z" fill="#f2f2f2" /><path d="M5 14q4-2 7-1-1 3-6 2z" fill="#111" /><path d="M13 13q5-3 6 0-1 5-5 6 2-4 1-5z" fill="#3cc9a8" /></Ico></TaskButton>
        <TaskButton $open aria-label="iTop Screen Recorder"><Ico w={22} stroke="none"><rect x="1" y="2" width="20" height="19" rx="4" fill="#180a0d" /><rect x="3.500" y="6.500" width="12" height="10" rx="2" fill="#e0334a" /><path d="m15.500 10.500 3.500-2.500v7l-3.500-2.500z" fill="#e0334a" /><circle cx="8" cy="11.500" r="2" stroke="#fff" strokeWidth="1.200" /><path d="M10 11.500q1-2 3-1M10 11.500q1 2 3 1" stroke="#fff" strokeWidth="1.200" /><path d="M2 5V1h3M20 5V1h-3" stroke="#7c2434" strokeWidth="1" /></Ico></TaskButton>
        <TaskButton $open aria-label="Voice Recorder"><Ico w={22} stroke="none"><rect x="7.500" y="1" width="7" height="12.500" rx="3.500" fill="#e8622c" /><path d="M4 9.500q0 7 7 7t7-7M11 16.500V20.500" stroke="#a5552f" strokeWidth="1.800" /></Ico></TaskButton>
        <Spacer />
        <Tray>
          <TrayButton $w={27} aria-label="Hidden icons"><Ico w={10} h={6} stroke="#f1f3f6"><path d="m1 5 4-4 4 4" /></Ico></TrayButton>
          <TrayButton $w={27} aria-label="Microphone"><Ico w={11} h={14} stroke="#9fc9de" strokeWidth="1.200"><rect x="3.500" y="1" width="4" height="7.500" rx="2" fill="#3c7f9f" /><path d="M1.500 6q0 4.500 4 4.500t4-4.500M5.500 10.500V13.500" /></Ico></TrayButton>
          <TrayButton $w={37}>ENG</TrayButton>
          <TrayButton $w={24} aria-label="Wi-Fi"><Ico w={14} h={11} stroke="#f1f3f6" strokeWidth="1.300"><path d="M1 4q6-5.500 12 0M3 6.300q4-3.600 8 0M5 8.500q2-1.800 4 0" /><circle cx="7" cy="9.800" r=".6" /></Ico></TrayButton>
          <TrayButton $w={18} aria-label="Volume"><Ico w={14} h={12} stroke="#f1f3f6" strokeWidth="1.200"><path d="M1 4.500h2l3-3v9l-3-3H1zM8 4q1.500 2 0 4M10 2.500q2.500 3.500 0 7M12 1q3 5 0 10" /></Ico></TrayButton>
          <TrayButton $w={20} aria-label="Battery"><Ico w={14} h={9} stroke="#f1f3f6" strokeWidth="1.200"><rect x="1" y="1" width="10.500" height="7" rx="1.500" /><path d="M2.500 2.500h5.500v4H2.500z" fill="#f1f3f6" stroke="none" /><path d="M13 3.300v2.400" /></Ico></TrayButton>
          <Clock>8:58 AM<br />9/21/2024</Clock>
          <TrayButton $w={24} aria-label="Notifications"><Ico w={12} h={13} stroke="none"><path d="M6 .5q4 .5 4 5l1.500 4.500H.5L2 5.500q0-4.500 4-5zM4 11h4q-.5 1.500-2 1.500T4 11z" fill="#6fd0f0" /></Ico></TrayButton>
        </Tray>
      </Taskbar>
    </App_>
  );
}
